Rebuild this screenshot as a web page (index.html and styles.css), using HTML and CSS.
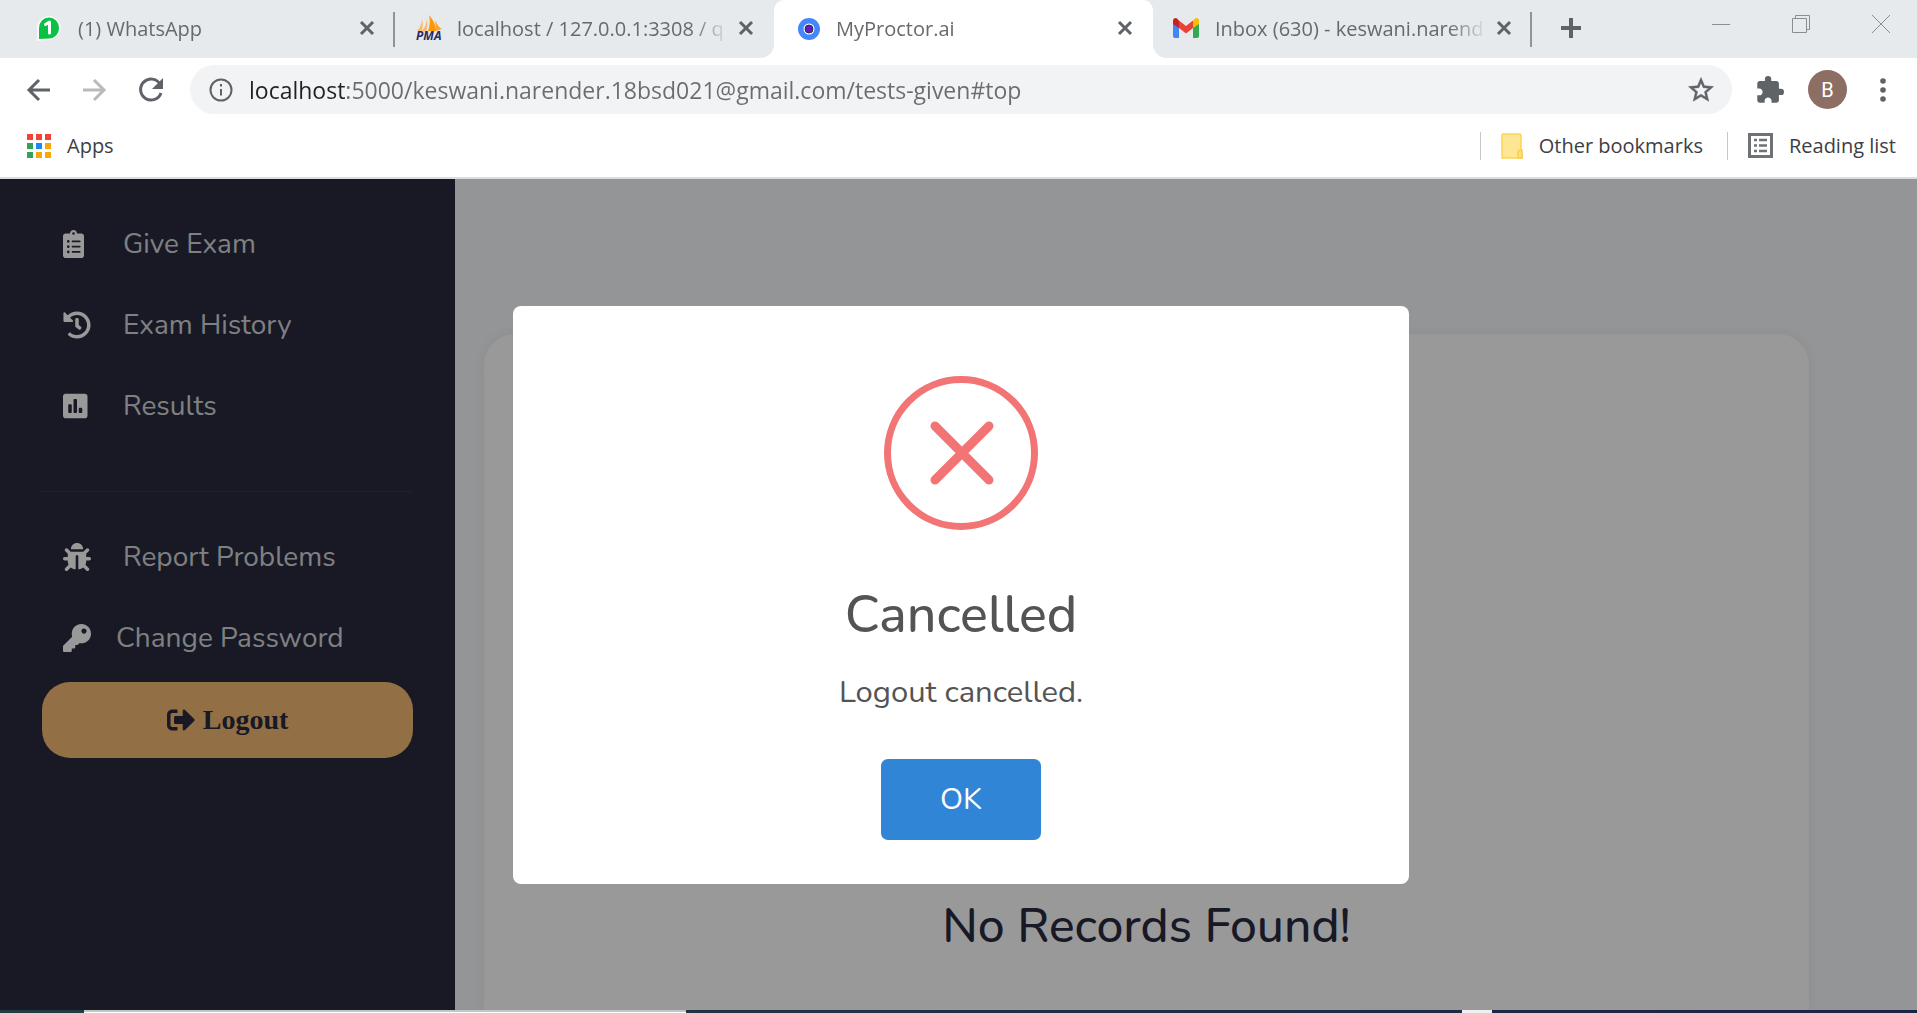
FILE: index.html
```html
<!DOCTYPE html>
<html lang="en">
<head>
<meta charset="utf-8">
<title>MyProctor.ai</title>
<link rel="stylesheet" href="styles.css">
</head>
<body>
<div class="browser">
  <header class="chrome">
    <div class="tabstrip">
      <div class="tab divided">
        <svg class="favicon" viewBox="0 0 26 26"><path d="M1 26V12A12 12 0 1 1 13 25z" fill="#f6fbf7"/><path d="M3 24V13A10 10.500 0 1 1 13 23.500z" fill="#0ac143"/><path d="M9.500 9.500L13.500 7v11" fill="none" stroke="#fff" stroke-width="3" stroke-linejoin="round" stroke-linecap="round"/></svg>
        <span class="tab-title">(1) WhatsApp</span>
        <button class="tab-close" aria-label="Close tab"><svg viewBox="0 0 16 16"><path d="M2 2l12 12M14 2L2 14"/></svg></button>
      </div>
      <div class="tab before-active">
        <svg class="favicon" viewBox="0 0 26 26"><path d="M14 0Q21 8 21 16H13Q16 8 14 0z" fill="#f90"/><path d="M7 4Q9 11 6 17L2 16Q7 10 7 4zM12 3Q13 11 11 17L7 16Q12 10 12 3z" fill="#fcb96a"/><path d="M20 5Q23 12 27 14L21 16Q21 10 20 5z" fill="#f9a13a"/><text x="1" y="25" class="pma">PMA</text></svg>
        <span class="tab-title">localhost / 127.0.0.1:3308 / q</span>
        <button class="tab-close" aria-label="Close tab"><svg viewBox="0 0 16 16"><path d="M2 2l12 12M14 2L2 14"/></svg></button>
      </div>
      <div class="tab-slot">
        <div class="tab active">
          <svg class="favicon" viewBox="0 0 26 26"><circle cx="15" cy="14" r="11" fill="#4486fb"/><circle cx="15" cy="14" r="5.500" fill="#fff"/><circle cx="15" cy="14" r="4" fill="#5b1fb8" stroke="#2a2a4a"/></svg>
          <span class="tab-title">MyProctor.ai</span>
          <button class="tab-close" aria-label="Close tab"><svg viewBox="0 0 16 16"><path d="M2 2l12 12M14 2L2 14"/></svg></button>
        </div>
      </div>
      <div class="tab divided after-active">
        <svg class="favicon" viewBox="0 0 26 26"><path d="M0 8v13q0 2 2 2h4V11z" fill="#4285f4"/><path d="M20 11v12h4q2 0 2-2V8z" fill="#34a853"/><path d="M6 5.500l7 5.500 7-5.500V13l-7 5.500L6 13z" fill="#ea4335"/><path d="M0 9V6q0-3 3-3 1 0 3 2.500V13z" fill="#c5221f"/><path d="M26 9V6q0-3-3-3-1 0-3 2.500V13z" fill="#fbbc04"/></svg>
        <span class="tab-title">Inbox (630) - keswani.narend</span>
        <button class="tab-close" aria-label="Close tab"><svg viewBox="0 0 16 16"><path d="M2 2l12 12M14 2L2 14"/></svg></button>
      </div>
      <button class="new-tab" aria-label="New tab"><svg viewBox="0 0 22 22"><path d="M11 1v20M1 11h20"/></svg></button>
      <div class="window-controls">
        <button aria-label="Minimize"><svg viewBox="0 0 18 18"><path d="M0 9.500h18"/></svg></button>
        <button aria-label="Restore"><svg viewBox="0 0 18 18"><path d="M.5 3.500h14v14H.5zM3.500 3.500v-3h14v14h-3"/></svg></button>
        <button aria-label="Close"><svg viewBox="0 0 18 18"><path d="M0 0l18 18M18 0L0 18"/></svg></button>
      </div>
    </div>
    <div class="toolbar">
      <button class="nav" aria-label="Back"><svg viewBox="0 0 32 32"><path d="M28 16H7M17 6L7 16l10 10"/></svg></button>
      <button class="nav muted" aria-label="Forward"><svg viewBox="0 0 32 32"><path d="M5 16h21M16 6l10 10-10 10"/></svg></button>
      <button class="nav" aria-label="Reload"><svg viewBox="0 0 32 32"><path d="M26 10A10.500 10.500 0 1 0 27 19"/><path class="solid" d="M29 4v11H18z"/></svg></button>
      <div class="omnibox">
        <svg class="info" viewBox="0 0 24 24"><circle cx="12" cy="12" r="10.500"/><path d="M12 11v6.500M12 6v2.500"/></svg>
        <input class="url" type="text" aria-label="Address" value="localhost:5000/keswani.narender.18bsd021@gmail.com/tests-given#top">
        <button class="star" aria-label="Bookmark this tab"><svg viewBox="0 0 24 24"><path d="M22 9.240l-7.190-.62L12 2 9.190 8.630 2 9.240l5.460 4.730L5.820 21 12 17.270 18.180 21l-1.630-7.030L22 9.240zM12 15.400l-3.760 2.270 1-4.280-3.320-2.880 4.380-.38L12 6.100l1.710 4.040 4.380.38-3.320 2.880 1 4.280L12 15.400z"/></svg></button>
      </div>
      <button class="tool" aria-label="Extensions"><svg viewBox="1 1 22 22"><path d="M20.500 11H19V7c0-1.100-.9-2-2-2h-4V3.500a2.500 2.500 0 0 0-5 0V5H4c-1.100 0-1.990.9-1.990 2v3.800H3.500c1.490 0 2.700 1.210 2.700 2.700s-1.210 2.700-2.700 2.700H2V20c0 1.100.9 2 2 2h3.800v-1.500c0-1.490 1.210-2.700 2.700-2.700 1.490 0 2.700 1.210 2.700 2.700V22H17c1.100 0 2-.9 2-2v-4h1.500a2.500 2.500 0 0 0 0-5z"/></svg></button>
      <button class="avatar" aria-label="Profile">B</button>
      <button class="menu" aria-label="Menu"><svg viewBox="0 0 24 24"><circle cx="12" cy="3" r="2.800"/><circle cx="12" cy="12" r="2.800"/><circle cx="12" cy="21" r="2.800"/></svg></button>
    </div>
    <nav class="bookmarks" aria-label="Bookmarks">
      <a href="#apps"><svg class="apps" viewBox="0 0 24 24"><path fill="#f44336" d="M0 0h6v6H0zM9 0h6v6H9zM18 0h6v6h-6z"/><path fill="#34a05a" d="M0 9h6v6H0zM0 18h6v6H0z"/><path fill="#1e88f5" d="M9 9h6v6H9z"/><path fill="#f9a60a" d="M18 9h6v6h-6zM9 18h6v6H9zM18 18h6v6h-6z"/></svg>Apps</a>
      <span class="spacer"></span>
      <a class="bookmark-end" href="#other"><svg class="folder" viewBox="0 0 22 26"><path d="M1 2.500Q1 1 2.500 1h16Q20 1 20 2.500V16l1 1v8H1z" fill="#ffe694" stroke="#fbd550" stroke-width="1.500"/><path d="M17 25v-6q0-2 2-2t2 2v6z" fill="#ffe07a" stroke="#f3c63a"/></svg>Other bookmarks</a>
      <a class="bookmark-end" href="#reading"><svg class="list" viewBox="0 0 25 25"><path d="M1.500 1.500h22v22h-22z" fill="none" stroke="#6e7276" stroke-width="3"/><path d="M6 7h3M6 12.500h3M6 18h3M11 7h8M11 12.500h8M11 18h8" stroke="#6e7276" stroke-width="2.500"/></svg>Reading list</a>
    </nav>
  </header>

  <div class="page">
    <aside class="sidebar">
      <nav class="side-nav">
        <a href="#give"><svg class="icon" viewBox="0 0 512 512"><path fill-rule="evenodd" d="M336 64h-80c0-35.300-28.700-64-64-64s-64 28.700-64 64H48C21.500 64 0 85.500 0 112v352c0 26.500 21.500 48 48 48h288c26.500 0 48-21.500 48-48V112c0-26.500-21.500-48-48-48zM96 424a24 24 0 1 1 0-48 24 24 0 0 1 0 48zm0-96a24 24 0 1 1 0-48 24 24 0 0 1 0 48zm0-96a24 24 0 1 1 0-48 24 24 0 0 1 0 48zm96-192a24 24 0 1 1 0 48 24 24 0 0 1 0-48zm128 368c0 4.400-3.600 8-8 8H168c-4.400 0-8-3.600-8-8v-16c0-4.400 3.600-8 8-8h144c4.400 0 8 3.600 8 8v16zm0-96c0 4.400-3.600 8-8 8H168c-4.400 0-8-3.600-8-8v-16c0-4.400 3.600-8 8-8h144c4.400 0 8 3.600 8 8v16zm0-96c0 4.400-3.600 8-8 8H168c-4.400 0-8-3.600-8-8v-16c0-4.400 3.600-8 8-8h144c4.400 0 8 3.600 8 8v16z"/></svg>Give Exam</a>
        <a href="#history"><svg class="icon" viewBox="0 0 512 512"><path d="M504 255.531c.253 136.640-111.180 248.372-247.820 248.468-59.015.042-113.223-20.530-155.822-54.911-11.077-8.940-11.905-25.541-1.839-35.607l11.267-11.267c8.609-8.609 22.353-9.551 31.891-1.984C173.062 425.135 212.781 440 256 440c101.705 0 184-82.311 184-184 0-101.705-82.311-184-184-184-48.814 0-93.149 18.969-126.068 49.932l50.754 50.754c10.080 10.080 2.941 27.314-11.313 27.314H24c-8.837 0-16-7.163-16-16V38.627c0-14.254 17.234-21.393 27.314-11.314l49.372 49.372C129.209 34.136 189.552 8 256 8c136.810 0 247.747 110.780 248 247.531zm-180.912 78.784l9.823-12.630c8.138-10.463 6.253-25.542-4.210-33.679L288 256.349V152c0-13.255-10.745-24-24-24h-16c-13.255 0-24 10.745-24 24v135.651l65.409 50.874c10.463 8.137 25.541 6.253 33.679-4.210z"/></svg>Exam History</a>
        <a href="#results"><svg class="icon" viewBox="0 0 512 512"><path fill-rule="evenodd" d="M400 32H48C21.500 32 0 53.500 0 80v352c0 26.500 21.500 48 48 48h352c26.500 0 48-21.500 48-48V80c0-26.500-21.500-48-48-48zM160 368c0 8.840-7.160 16-16 16h-32c-8.840 0-16-7.160-16-16V240c0-8.840 7.160-16 16-16h32c8.840 0 16 7.160 16 16v128zm96 0c0 8.840-7.160 16-16 16h-32c-8.840 0-16-7.160-16-16V144c0-8.840 7.160-16 16-16h32c8.840 0 16 7.160 16 16v224zm96 0c0 8.840-7.160 16-16 16h-32c-8.840 0-16-7.160-16-16v-64c0-8.840 7.160-16 16-16h32c8.840 0 16 7.160 16 16v64z"/></svg>Results</a>
      </nav>
      <hr class="rule">
      <nav class="side-nav">
        <a href="#report"><svg class="icon" viewBox="0 0 512 512"><path d="M511.988 288.900c-.478 17.430-15.217 31.100-32.653 31.100H424v16c0 21.864-4.882 42.584-13.600 61.145l60.228 60.228c12.496 12.497 12.496 32.758 0 45.255-12.498 12.497-32.759 12.496-45.256 0l-54.736-54.736C345.886 467.965 314.351 480 280 480V236c0-6.627-5.373-12-12-12h-24c-6.627 0-12 5.373-12 12v244c-34.351 0-65.886-12.035-90.636-32.108l-54.736 54.736c-12.498 12.497-32.759 12.496-45.256 0-12.496-12.497-12.496-32.758 0-45.255l60.228-60.228C92.882 378.584 88 357.864 88 336v-16H32.666C15.230 320 .491 306.330.013 288.900-.484 270.816 13.458 256 31.500 256H88v-58.745l-46.628-46.628c-12.496-12.497-12.496-32.758 0-45.255 12.498-12.497 32.758-12.497 45.256 0L141.255 160h229.489l54.627-54.627c12.498-12.497 32.758-12.497 45.256 0 12.496 12.497 12.496 32.758 0 45.255L424 197.255V256h56.500c18.042 0 31.984 14.816 31.488 32.900zM257 0c-61.856 0-112 50.144-112 112h224C369 50.144 318.856 0 257 0z"/></svg>Report Problems</a>
        <a class="tight" href="#password"><svg class="icon" viewBox="0 0 512 512"><path d="M512 176.001C512 273.203 433.202 352 336 352c-11.220 0-22.190-1.062-32.827-3.069l-24.012 27.014A23.999 23.999 0 0 1 261.223 384H224v40c0 13.255-10.745 24-24 24h-40v40c0 13.255-10.745 24-24 24H24c-13.255 0-24-10.745-24-24v-78.059c0-6.365 2.529-12.470 7.029-16.971l161.802-161.802C163.108 213.814 160 195.271 160 176 160 78.798 238.797.001 335.999 0 433.488-.001 512 78.511 512 176.001zM336 128c0 26.510 21.490 48 48 48s48-21.490 48-48-21.490-48-48-48-48 21.490-48 48z"/></svg>Change Password</a>
      </nav>
      <button class="logout"><svg class="icon" viewBox="0 0 512 512"><path d="M497 273L329 441c-15 15-41 4.500-41-17v-96H152c-13.300 0-24-10.700-24-24v-96c0-13.300 10.700-24 24-24h136V88c0-21.400 25.900-32 41-17l168 168c9.300 9.400 9.300 24.600 0 34zM192 436v-40c0-6.600-5.400-12-12-12H96c-17.700 0-32-14.300-32-32V160c0-17.700 14.300-32 32-32h84c6.600 0 12-5.400 12-12V76c0-6.600-5.400-12-12-12H96c-53 0-96 43-96 96v192c0 53 43 96 96 96h84c6.600 0 12-5.400 12-12z"/></svg>Logout</button>
    </aside>
    <main class="content">
      <section class="card"><h1 class="empty">No Records Found!</h1></section>
    </main>
    <div class="overlay">
      <div class="modal" role="dialog" aria-modal="true" aria-labelledby="modal-title">
        <svg class="error" viewBox="0 0 154 154"><circle cx="77" cy="77" r="73.500" stroke-width="7"/><path d="M51 50l54 54M105 50l-54 54" stroke-width="9"/></svg>
        <h2 class="modal-title" id="modal-title">Cancelled</h2>
        <p class="modal-text">Logout cancelled.</p>
        <button class="ok">OK</button>
      </div>
    </div>
  </div>

  <div class="taskbar"><span class="peek"></span><span class="app"></span></div>
</div>
</body>
</html>
```
FILE: styles.css
```css
* { box-sizing: border-box; }
body { margin: 0; }
button { border: 0; padding: 0; background: none; font: inherit; color: inherit; }
a { color: inherit; text-decoration: none; }
svg { display: block; flex: none; }

.browser {
  display: flex;
  flex-direction: column;
  height: 100vh;
  overflow: hidden;
}

/* Browser frame */
.chrome {
  flex: none;
  background: #fff;
  border-bottom: 2px solid #dadce0;
  font-family: "Open Sans", sans-serif;
  color: #3c4043;
}
.tabstrip {
  display: flex;
  align-items: center;
  height: 58px;
  padding-left: 16px;
  background: linear-gradient(#e6eaed, #e6eaed) top / 100% 40px no-repeat #fff;
}
.tabstrip::before {
  content: "";
  align-self: stretch;
  width: 16px;
  margin-left: -16px;
  background: #e6eaed;
}
.tab {
  display: flex;
  flex: 0 1 379px;
  align-items: center;
  gap: 16px;
  min-width: 0;
  height: 58px;
  padding: 0 20px 2px;
  background: #e6eaed;
  font-size: 20px;
  color: #66696d;
}
.tab.divided {
  background: linear-gradient(#909498, #909498) right center / 2px 35px no-repeat #e6eaed;
}
.tab-slot { flex: 0 1 379px; min-width: 0; }
.tab.active { background: #fff; border-radius: 10px 10px 0 0; }
.before-active { border-bottom-right-radius: 14px; }
.after-active { border-bottom-left-radius: 14px; }
.favicon { width: 26px; height: 26px; overflow: visible; }
.pma { font: italic bold 12px "Open Sans", sans-serif; fill: #2a2a66; }
.tab-title {
  flex: 1;
  min-width: 0;
  margin-right: -8px;
  overflow: hidden;
  white-space: nowrap;
  mask-image: linear-gradient(to right, #000 calc(100% - 40px), transparent);
}
.tab-close svg { width: 16px; height: 16px; fill: none; stroke: #5f6368; stroke-width: 3; }
.new-tab {
  align-self: stretch;
  padding: 0 0 2px 28px;
  background: #e6eaed;
}
.new-tab svg { width: 22px; height: 22px; fill: none; stroke: #5f6368; stroke-width: 4; }
.window-controls {
  display: flex;
  flex: 1;
  align-self: stretch;
  align-items: center;
  justify-content: flex-end;
  gap: 62px;
  padding: 0 27px 10px 0;
  background: #e6eaed;
}
.window-controls svg { width: 18px; height: 18px; fill: none; stroke: #8b8e91; }

.toolbar {
  display: flex;
  align-items: center;
  gap: 24px;
  padding: 7px 22px 0;
}
.nav svg { width: 32px; height: 32px; fill: none; stroke: #5f6368; stroke-width: 3; }
.nav .solid { fill: #5f6368; stroke: none; }
.nav.muted svg { stroke: #bababa; }
.omnibox {
  display: flex;
  flex: 1;
  align-items: center;
  gap: 16px;
  height: 49px;
  padding: 0 16px 0 19px;
  border-radius: 25px;
  background: #f1f3f4;
}
.info { width: 24px; height: 24px; fill: none; stroke: #5f6368; stroke-width: 2; }
.url {
  flex: 1;
  min-width: 0;
  height: 40px;
  padding: 0;
  border: 0;
  outline: 0;
  font: 23px "Open Sans", sans-serif;
  background: linear-gradient(to right, #202124 98px, #696c70 98px);
  background-clip: text;
  color: transparent;
}
.star svg { width: 30px; height: 30px; fill: #5f6368; stroke: #5f6368; stroke-width: 0.4px; }
.tool svg { width: 28px; height: 28px; fill: #5f6368; }
.avatar {
  width: 39px;
  height: 39px;
  border-radius: 50%;
  background: #8d6e63;
  color: #fff;
  font: 20px Roboto, sans-serif;
}
.menu svg { width: 24px; height: 24px; fill: #5f6368; }

.bookmarks {
  display: flex;
  align-items: center;
  height: 63px;
  padding: 0 21px 0 27px;
  font-size: 20px;
}
.bookmarks a { display: flex; align-items: center; gap: 16px; }
.spacer { flex: 1; }
.bookmarks .bookmark-end {
  height: 28px;
  margin-left: 24px;
  padding-left: 20px;
  border-left: 1px solid #c4c7ca;
}
.apps { width: 24px; height: 24px; }
.folder { width: 22px; height: 26px; }
.list { width: 25px; height: 25px; }

/* Page under the dialog */
.page {
  position: relative;
  display: flex;
  flex: 1;
  min-height: 0;
  overflow: hidden;
  background: #f5f8fa;
  font-family: Nunito, Lato, sans-serif;
}
.sidebar {
  display: flex;
  flex: 0 0 455px;
  flex-direction: column;
  padding: 28px 42px 0;
  background: #282b3f;
  color: #d3d6d8;
}
.side-nav { display: flex; flex-direction: column; gap: 7px; }
.side-nav a {
  display: flex;
  align-items: center;
  gap: 32px;
  height: 74px;
  padding-left: 21px;
  font-size: 28px;
}
.side-nav .tight { gap: 25px; }
.icon { width: 28px; height: 28px; fill: currentColor; }
.side-nav .icon { fill: #fff; }
.rule {
  width: 100%;
  height: 1px;
  margin: 48px 0 28px;
  border: 0;
  background: #333649;
}
.logout {
  display: flex;
  align-items: center;
  justify-content: center;
  gap: 8px;
  height: 76px;
  margin-top: 7px;
  border-radius: 28px;
  background: #f3b973;
  color: #282b3f;
  font: bold 28px "Liberation Serif", serif;
}
.content {
  display: flex;
  flex: 1;
  padding: 155px 108px 0 29px;
}
.card {
  flex: 1;
  padding-top: 562px;
  border-radius: 31px 31px 0 0;
  background: #fff;
  box-shadow: 0 0 12px rgba(20, 20, 0, .06);
  text-align: center;
}
.empty {
  margin: 0;
  font-size: 48px;
  line-height: 60px;
  font-weight: 500;
  color: #282b3f;
}
.overlay {
  position: absolute;
  inset: 0;
  display: flex;
  align-items: center;
  justify-content: center;
  padding: 1px 0 0 5px;
  background: rgba(0, 0, 0, .4);
}
.modal {
  display: flex;
  flex-direction: column;
  align-items: center;
  width: 896px;
  max-width: 90%;
  padding: 70px 44px 44px;
  border-radius: 8px;
  background: #fff;
  color: #545454;
}
.error { width: 154px; height: 154px; fill: none; stroke: #f27474; stroke-linecap: round; }
.modal-title { margin: 51px 0 19px; font-size: 52px; line-height: 68px; font-weight: 500; }
.modal-text { margin: 0 0 43px; font-size: 31px; line-height: 48px; }
.ok {
  width: 160px;
  height: 81px;
  border-radius: 7px;
  background: #3085d6;
  color: #fff;
  font-size: 30px;
}

/* Sliver of the desktop taskbar */
.taskbar {
  display: flex;
  flex: none;
  height: 3px;
  background: linear-gradient(to right, #223c44, #1c2444);
}
.peek { width: 602px; margin-left: 84px; border-top: 2px solid #c4c6c6; background: #fff; }
.app { width: 30px; margin-left: 776px; background: #f0f0f0; }
```
